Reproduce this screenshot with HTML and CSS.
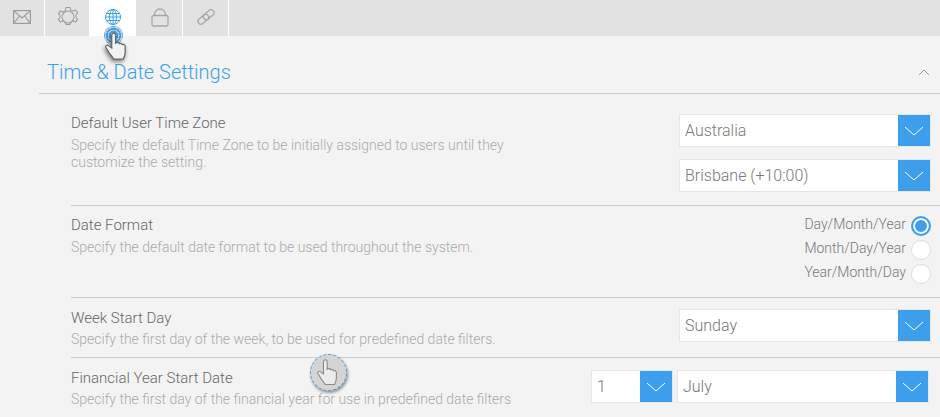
FILE: index.html
```html
<!doctype html>
<html lang="en">
    <head>
        <meta charset="UTF-8" />
        <title>Time &amp; Date Settings</title>
        <link rel="stylesheet" href="styles.css">
    </head>
    <body>
        <div class="tabs">
            <div class="tab">
                <svg width="18" height="14" viewBox="0 0 18 14" fill="none" stroke="#9c9c9c" stroke-width="1.200"><rect x="0.600" y="0.600" width="16.800" height="12.800"/><path d="M0.600 0.600 9 8l8.400-7.400M0.600 13.400 6.500 6M17.400 13.400 11.500 6"/></svg>
            </div>
            <div class="tab">
                <svg class="gear" width="22" height="22" viewBox="0 0 22 22" fill="none" stroke="#a0a0a0" stroke-width="1.100" stroke-linejoin="round"><path d="M9 1.500h4l.8 2.600 2.400 1 2.400-1.200 2 3-1.600 2.100v2l1.600 2.100-2 3-2.400-1.200-2.400 1-.8 2.600H9l-.8-2.600-2.400-1-2.400 1.200-2-3 1.600-2.100v-2L1.400 7.900l2-3 2.400 1.200 2.400-1z"/><circle cx="11" cy="11" r="6"/></svg>
            </div>
            <div class="tab active">
                <svg width="18" height="18" viewBox="0 0 18 18" fill="none" stroke="#3d9fec"><circle cx="9" cy="9" r="7.500"/><ellipse cx="9" cy="9" rx="3.500" ry="7.500"/><path d="M9 1.500v15M2.500 5.500h13M1.500 9h15M2.500 12.500h13"/></svg>
            </div>
            <div class="tab wide-tab">
                <svg width="18" height="19" viewBox="0 0 18 19" fill="none" stroke="#a6a6a6" stroke-width="1.300"><rect x="1" y="7.500" width="16" height="10.500" rx="1.500"/><path d="M3.500 7.500V6.500a5.500 5.500 0 0 1 11 0V7.500"/></svg>
            </div>
            <div class="tab wide-tab">
                <svg width="20" height="18" viewBox="0 0 20 18" fill="none" stroke="#a6a6a6" stroke-width="1.300"><g transform="rotate(-40 10 9)"><rect x="0.500" y="6" width="12" height="6" rx="3"/><rect x="7.500" y="6" width="12" height="6" rx="3"/></g></svg>
            </div>
        </div>

        <div class="settings">
            <div class="settings-head">
                <h2>Time &amp; Date Settings</h2>
                <svg class="collapse" width="12" height="7" viewBox="0 0 12 7" fill="none" stroke="#a0a0a0"><path d="M1 6l5-5 5 5"/></svg>
            </div>

            <div class="row row-zone">
                <div class="info">
                    <div class="label">Default User Time Zone</div>
                    <div class="desc">Specify the default Time Zone to be initially assigned to users until they customize the setting.</div>
                </div>
                <div class="controls stacked">
                    <div class="select wide"><span>Australia</span><i class="arrow"><svg width="20" height="10" viewBox="0 0 20 10" fill="none" stroke="#fff"><path d="M1 1l9 8 9-8"/></svg></i></div>
                    <div class="select wide"><span>Brisbane (+10:00)</span><i class="arrow"><svg width="20" height="10" viewBox="0 0 20 10" fill="none" stroke="#fff"><path d="M1 1l9 8 9-8"/></svg></i></div>
                </div>
            </div>

            <div class="row row-date">
                <div class="info">
                    <div class="label">Date Format</div>
                    <div class="desc">Specify the default date format to be used throughout the system.</div>
                </div>
                <div class="radios">
                    <div class="radio-row">Day/Month/Year<span class="radio checked"></span></div>
                    <div class="radio-row">Month/Day/Year<span class="radio"></span></div>
                    <div class="radio-row">Year/Month/Day<span class="radio"></span></div>
                </div>
            </div>

            <div class="row row-week">
                <div class="info">
                    <div class="label">Week Start Day</div>
                    <div class="desc">Specify the first day of the week, to be used for predefined date filters.</div>
                </div>
                <div class="controls">
                    <div class="select wide"><span>Sunday</span><i class="arrow"><svg width="20" height="10" viewBox="0 0 20 10" fill="none" stroke="#fff"><path d="M1 1l9 8 9-8"/></svg></i></div>
                </div>
            </div>

            <div class="row row-year">
                <div class="info">
                    <div class="label">Financial Year Start Date</div>
                    <div class="desc">Specify the first day of the financial year for use in predefined date filters</div>
                </div>
                <div class="controls inline">
                    <div class="select small"><span>1</span><i class="arrow"><svg width="20" height="10" viewBox="0 0 20 10" fill="none" stroke="#fff"><path d="M1 1l9 8 9-8"/></svg></i></div>
                    <div class="select wide"><span>July</span><i class="arrow"><svg width="20" height="10" viewBox="0 0 20 10" fill="none" stroke="#fff"><path d="M1 1l9 8 9-8"/></svg></i></div>
                </div>
            </div>
        </div>

        <!-- click markers from the tutorial recording -->
        <div class="pulse"></div>
        <svg class="hand" width="25" height="32" viewBox="0 0 26 32"><path d="M8 2c1.500-1 3 0 3 2v8l1-.5c1.500-.5 2.500 0 3 1 1.500-.5 2.500 0 3 1 1.500-.5 3 .5 3 2v6c0 3-1 5-2 7H9c-1-2-3-4-5-7l-3-5c-.8-1.500 1-3 2.500-2L7 17V4c0-1 .3-1.600 1-2z" fill="#f2f2f2" stroke="#666" stroke-width="1.300"/></svg>
        <div class="bubble">
            <svg width="24" height="30" viewBox="0 0 26 32"><path d="M8 2c1.500-1 3 0 3 2v8l1-.5c1.500-.5 2.500 0 3 1 1.500-.5 2.500 0 3 1 1.500-.5 3 .5 3 2v6c0 3-1 5-2 7H9c-1-2-3-4-5-7l-3-5c-.8-1.500 1-3 2.500-2L7 17V4c0-1 .3-1.600 1-2z" fill="#ececec" stroke="#8a8a8a" stroke-width="1.200"/></svg>
        </div>
    </body>
</html>
```

FILE: styles.css
```css
html,
body {
    height: 100%;
    overflow: hidden;
}
body {
    margin: 0;
    background-color: #f3f3f3;
    font-family: Roboto, "Liberation Sans", sans-serif;
    font-weight: 300;
    color: #777;
    position: relative;
}
.tabs {
    display: flex;
    height: 36px;
    background-color: #e2e2e2;
}
.tab {
    width: 45px;
    box-sizing: border-box;
    padding-bottom: 2px;
    border-right: 1px solid #fff;
    display: flex;
    align-items: center;
    justify-content: center;
}
.tab.active {
    width: 47px;
    background-color: #fff;
    border-right: 1px solid #e2e2e2;
}
.wide-tab {
    width: 46px;
}
.gear {
    margin-left: 2px;
}
.settings {
    padding-left: 39px;
}
.settings-head {
    height: 58px;
    box-sizing: border-box;
    border-bottom: 1px solid #ccc;
    padding: 0 10px 9px 8px;
    display: flex;
    justify-content: space-between;
    align-items: flex-end;
}
h2 {
    margin: 0;
    font-size: 20px;
    line-height: 24px;
    font-weight: 300;
    color: #3d9fec;
}
.collapse {
    margin-bottom: 8px;
}
.row {
    display: flex;
    justify-content: space-between;
    margin-left: 32px;
    border-bottom: 1px solid #ccc;
    box-sizing: border-box;
    padding-right: 9px;
}
.row-zone {
    height: 112px;
    padding-top: 20px;
}
.row-date {
    height: 92px;
    padding-top: 10px;
}
.row-week {
    height: 60px;
    padding-top: 10px;
}
.row-year {
    height: 60px;
    padding-top: 10px;
    border-bottom: none;
}
.info {
    width: 450px;
}
.label {
    font-size: 15px;
    line-height: 18px;
    color: #666;
}
.desc {
    font-size: 14px;
    line-height: 17px;
    margin-top: 5px;
    color: #aaa;
}
.row-week .label,
.row-year .label {
    padding-top: 1px;
}
.row-week .desc,
.row-year .desc {
    margin-top: 4px;
}
.controls {
    display: flex;
}
.stacked {
    flex-direction: column;
    gap: 12px;
}
.row-week .controls {
    margin-top: 1px;
}
.row-year .controls {
    margin-top: 2px;
}
.inline {
    gap: 4px;
    margin-right: 2px;
}
.select {
    height: 33px;
    box-sizing: border-box;
    background-color: #fff;
    border: 1px solid #e6e6e6;
    display: flex;
    justify-content: space-between;
    font-size: 16px;
    line-height: 32px;
    color: #777;
}
.select span {
    padding-left: 5px;
}
.wide {
    width: 252px;
}
.small {
    width: 82px;
}
.arrow {
    width: 32px;
    height: 31px;
    background-color: #3d9fec;
    display: flex;
    align-items: center;
    justify-content: center;
}
.radios {
    display: flex;
    flex-direction: column;
    gap: 4px;
}
.radio-row {
    display: flex;
    align-items: flex-start;
    justify-content: flex-end;
    gap: 5px;
    height: 20px;
    font-size: 14px;
    line-height: 16px;
    color: #777;
}
.radio {
    width: 20px;
    height: 20px;
    box-sizing: border-box;
    border: 1px solid #ddd;
    border-radius: 50%;
    background-color: #fff;
}
.radio.checked {
    border: 2px solid #3d9fec;
    background-color: #3d9fec;
    box-shadow: inset 0 0 0 2px #fff;
}
.pulse {
    position: absolute;
    left: 104px;
    top: 26px;
    width: 19px;
    height: 19px;
    border-radius: 50%;
    background: repeating-radial-gradient(circle, #3d9fec 0, #3d9fec 1.500px, #b9c9d6 1.500px, #b9c9d6 3px);
}
.hand {
    position: absolute;
    left: 105px;
    top: 31px;
    filter: drop-shadow(-1px 2px 2px rgba(0, 0, 0, 0.5));
}
.bubble {
    position: absolute;
    left: 310px;
    top: 354px;
    width: 37px;
    height: 37px;
    box-sizing: border-box;
    border: 1px dashed #3d9fec;
    border-radius: 50%;
    background-color: #d4d4d4;
    box-shadow: 1px 2px 3px rgba(0, 0, 0, 0.4);
    display: flex;
    align-items: center;
    justify-content: center;
}
```
